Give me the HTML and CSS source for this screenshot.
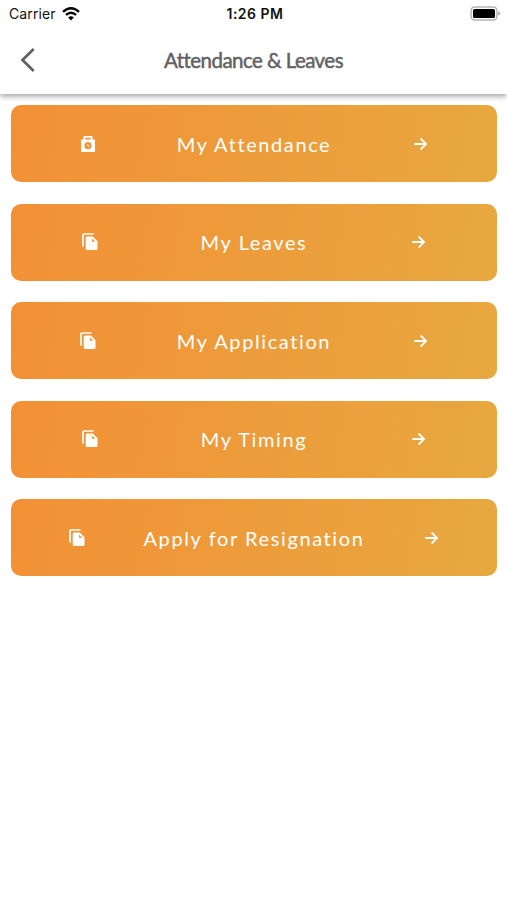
FILE: index.html
```html
<!DOCTYPE html>
<html lang="en">
<head>
    <meta charset="UTF-8">
    <title>Attendance &amp; Leaves</title>
    <link rel="stylesheet" href="styles.css">
</head>
<body>
    <!-- Shared icons -->
    <svg class="sprite" width="0" height="0">
        <symbol id="copy" viewBox="0 0 16 18">
            <path d="M1 13.5V2.2Q1 1 2.2 1H11.5" fill="none" stroke="currentColor" stroke-width="1.7"/>
            <path fill-rule="evenodd" d="M5 3.6h5.8L15.5 8.3v7.2q0 1.5-1.5 1.5H5.2q-1.5 0-1.5-1.5V5.1q0-1.5 1.5-1.5zM10 5.6v3.2h3.2z"/>
        </symbol>
        <symbol id="arrow" viewBox="0 0 16 16">
            <path d="M2.3 8h11.2M8.6 2.5l5.5 5.5-5.5 5.5" fill="none" stroke="currentColor" stroke-width="1.8"/>
        </symbol>
    </svg>

    <div class="status-bar">
        <div class="carrier">
            <span>Carrier</span>
            <svg width="18" height="14" viewBox="0 0 18 14">
                <path d="M1 4.8Q9-2.2 17 4.8M3.9 7.9Q9 3.5 14.1 7.9" fill="none" stroke="#000" stroke-width="2.3"/>
                <path d="M6.2 10.4Q9 8 11.8 10.4L9 13.4z"/>
            </svg>
        </div>
        <div class="time">1:26 PM</div>
        <svg class="battery" width="31" height="15" viewBox="0 0 31 15">
            <rect x="1" y="1" width="26" height="13" rx="3.8" fill="#fff" stroke="#b5b5b5" stroke-width="1.5"/>
            <rect x="3" y="3" width="22" height="9" rx="1.5"/>
            <path d="M28.3 5.3q2 .7 2 2.2t-2 2.2z" fill="#aaa"/>
        </svg>
    </div>

    <div class="header">
        <svg class="back" width="16" height="26" viewBox="0 0 16 26">
            <path d="M13.7 2L2.5 13l11.2 11" fill="none" stroke="currentColor" stroke-width="2.7"/>
        </svg>
        <h1>Attendance &amp; Leaves</h1>
    </div>

    <div class="menu">
        <button class="item">
            <svg class="icon" viewBox="0 0 16 18">
                <path fill-rule="evenodd" d="M1 5.5q0-1 1-1h1.4V2.3Q3.4 1 4.7 1h6.6q1.3 0 1.3 1.3v2.2H14q1 0 1 1V16q0 1-1 1H2q-1 0-1-1zM5.3 2.8v1.7h5.4V2.8zM8 7.1a3.6 3.6 0 1 0 0 7.2 3.6 3.6 0 1 0 0-7.2z"/>
                <path d="M7.8 8.8v2.1l1.4.9" fill="none" stroke="currentColor" stroke-width="1"/>
            </svg>
            <span>My Attendance</span>
            <svg class="icon arrow"><use href="#arrow"/></svg>
        </button>
        <button class="item">
            <svg class="icon"><use href="#copy"/></svg>
            <span>My Leaves</span>
            <svg class="icon arrow"><use href="#arrow"/></svg>
        </button>
        <button class="item">
            <svg class="icon"><use href="#copy"/></svg>
            <span>My Application</span>
            <svg class="icon arrow"><use href="#arrow"/></svg>
        </button>
        <button class="item">
            <svg class="icon"><use href="#copy"/></svg>
            <span>My Timing</span>
            <svg class="icon arrow"><use href="#arrow"/></svg>
        </button>
        <button class="item">
            <svg class="icon"><use href="#copy"/></svg>
            <span>Apply for Resignation</span>
            <svg class="icon arrow"><use href="#arrow"/></svg>
        </button>
    </div>
</body>
</html>
```
FILE: styles.css
```css
body {
    margin: 0;
    background: #fff;
    font-family: Lato, sans-serif;
}
.sprite {
    display: block;
}
.status-bar {
    display: grid;
    grid-template-columns: 1fr auto 1fr;
    align-items: center;
    height: 27px;
    padding: 0 6px 0 9px;
    font-family: Inter, sans-serif;
    font-size: 14px;
    color: #111;
}
.carrier {
    display: flex;
    align-items: center;
    gap: 6px;
    letter-spacing: 0.1px;
}
.time {
    font-weight: 600;
    letter-spacing: 0.5px;
}
.battery {
    justify-self: end;
}
.header {
    display: grid;
    grid-template-columns: 36px 1fr 36px;
    align-items: center;
    height: 67px;
    box-sizing: border-box;
    padding: 0 18px 0 20px;
    color: #606060;
    box-shadow: 0 2px 6px rgba(0,0,0,0.4);
    clip-path: inset(0 0 -10px 0);
}
.back {
    margin-top: -2px;
}
h1 {
    margin: 0 2px 2px 0;
    font-size: 20.5px;
    font-weight: normal;
    letter-spacing: -0.55px;
    text-align: center;
    -webkit-text-stroke: 0.5px #666;
}
.menu {
    display: flex;
    flex-direction: column;
    gap: 21.5px;
    padding: 11.4px 10px 0 11px;
}
.item {
    display: flex;
    align-items: center;
    justify-content: space-around;
    height: 77px;
    padding: 0 28px;
    border: none;
    border-radius: 10px;
    background: linear-gradient(100deg, #f39036, #e7a83f);
    color: #fff;
    font-family: Lato, sans-serif;
    font-size: 20px;
    letter-spacing: 1.6px;
    cursor: pointer;
}
.item span {
    min-width: 141px;
    text-align: center;
}
.icon {
    width: 16px;
    height: 18px;
    fill: currentColor;
}
.arrow {
    height: 16px;
}
```
